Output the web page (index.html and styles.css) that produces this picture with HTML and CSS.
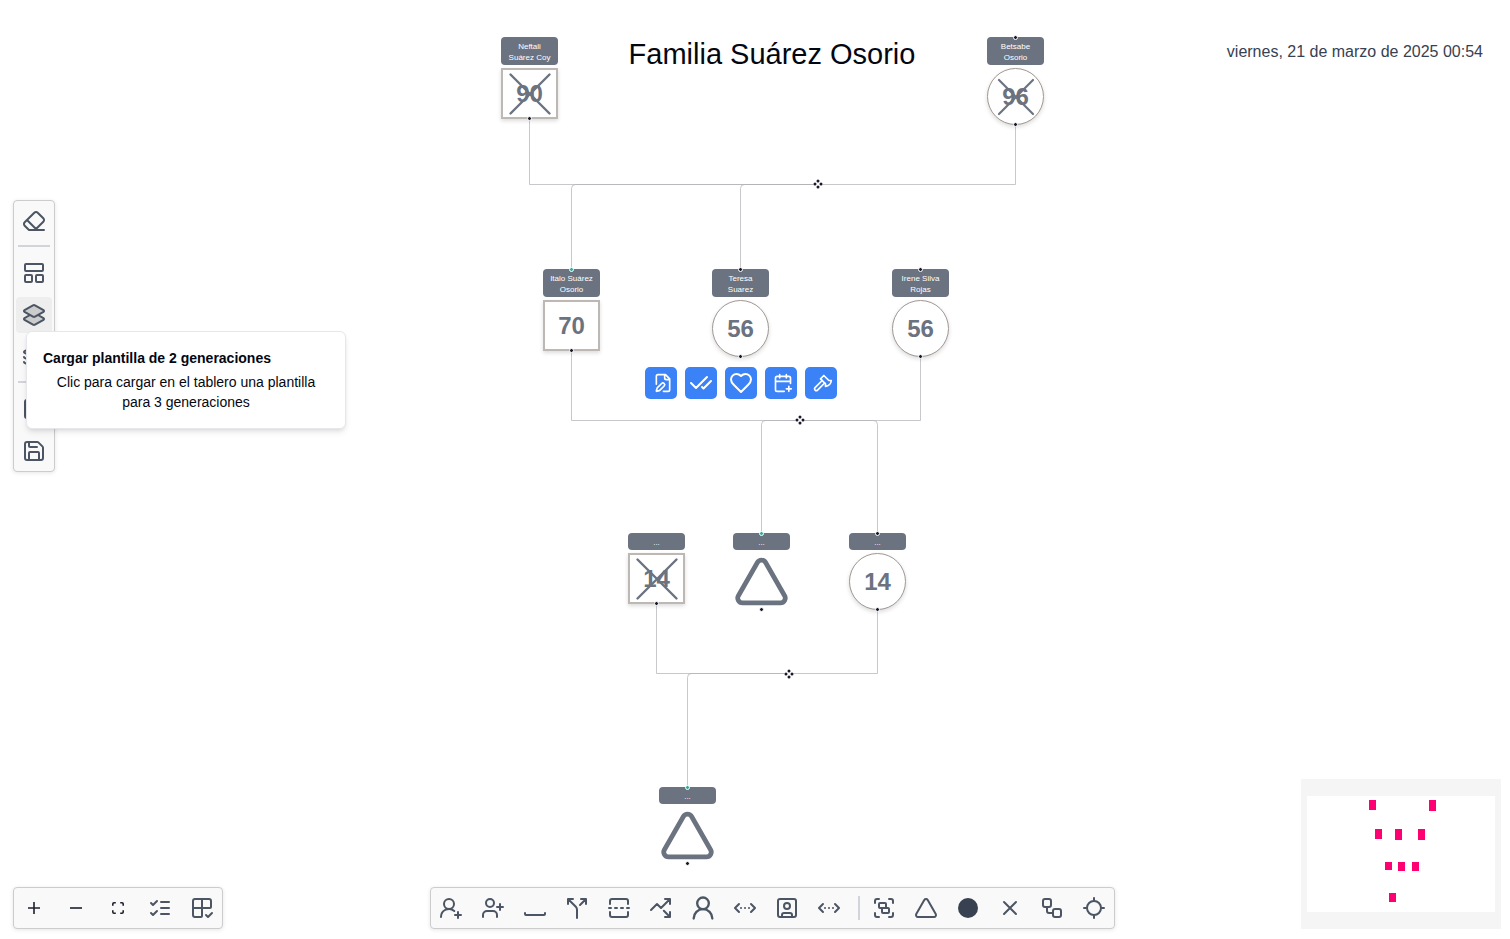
FILE: index.html
```html
<!DOCTYPE html>
<html lang="es">
<head>
<meta charset="utf-8">
<meta name="viewport" content="width=device-width, initial-scale=1">
<title>Familia Suárez Osorio</title>
<link rel="stylesheet" href="styles.css">
</head>
<body>
<svg class="sprite" aria-hidden="true">
  <symbol id="eraser" viewBox="0 0 24 24"><path d="m7 21-4.3-4.3c-1-1-1-2.5 0-3.4l9.6-9.6c1-1 2.5-1 3.4 0l5.6 5.6c1 1 1 2.5 0 3.4L13 21M22 21H7M5 11l9 9"/></symbol>
  <symbol id="panels" viewBox="0 0 24 24"><rect width="18" height="7" x="3" y="3" rx="1"/><rect width="7" height="7" x="3" y="14" rx="1"/><rect width="7" height="7" x="14" y="14" rx="1"/></symbol>
  <symbol id="layers2" viewBox="0 0 24 24"><path d="m16.02 12 5.48 3.13a1 1 0 0 1 0 1.74L13 21.74a2 2 0 0 1-2 0l-8.5-4.87a1 1 0 0 1 0-1.74L7.98 12"/><path d="M13 13.74a2 2 0 0 1-2 0L2.5 8.87a1 1 0 0 1 0-1.74L11 2.26a2 2 0 0 1 2 0l8.5 4.87a1 1 0 0 1 0 1.74Z"/></symbol>
  <symbol id="layers3" viewBox="0 0 24 24"><path d="M12.83 2.18a2 2 0 0 0-1.66 0L2.6 6.08a1 1 0 0 0 0 1.83l8.58 3.91a2 2 0 0 0 1.66 0l8.58-3.9a1 1 0 0 0 0-1.83z"/><path d="M2 12a1 1 0 0 0 .58.91l8.6 3.91a2 2 0 0 0 1.65 0l8.58-3.9A1 1 0 0 0 22 12"/><path d="M2 17a1 1 0 0 0 .58.91l8.6 3.91a2 2 0 0 0 1.65 0l8.58-3.9A1 1 0 0 0 22 17"/></symbol>
  <symbol id="image" viewBox="0 0 24 24"><rect width="18" height="18" x="3" y="3" rx="2"/><circle cx="9" cy="9" r="2"/><path d="m21 15-3.1-3.1a2 2 0 0 0-2.8 0L6 21"/></symbol>
  <symbol id="save" viewBox="0 0 24 24"><path d="M15.2 3a2 2 0 0 1 1.4.6l3.8 3.8a2 2 0 0 1 .6 1.4V19a2 2 0 0 1-2 2H5a2 2 0 0 1-2-2V5a2 2 0 0 1 2-2z"/><path d="M17 21v-7a1 1 0 0 0-1-1H8a1 1 0 0 0-1 1v7M7 3v4a1 1 0 0 0 1 1h7"/></symbol>
  <symbol id="plus" viewBox="0 0 12 12"><path d="M6 0v12M0 6h12"/></symbol>
  <symbol id="minus" viewBox="0 0 12 12"><path d="M0 6h12"/></symbol>
  <symbol id="fit" viewBox="0 0 12 12"><path d="M.8 3.8V2Q.8.8 2 .8h1.8M8.2.8H10q1.2 0 1.2 1.2v1.8M11.2 8.2V10q0 1.2-1.2 1.2H8.2M3.8 11.2H2Q.8 11.2.8 10V8.2"/></symbol>
  <symbol id="checks" viewBox="0 0 24 24"><path d="m3 17 2 2 4-4M3 7l2 2 4-4M13 6h8M13 12h8M13 18h8"/></symbol>
  <symbol id="gridcheck" viewBox="0 0 24 24"><path d="M12 3v17a1 1 0 0 1-1 1H5a2 2 0 0 1-2-2V5a2 2 0 0 1 2-2h14a2 2 0 0 1 2 2v6a1 1 0 0 1-1 1H3M16 19l2 2 4-4"/></symbol>
  <symbol id="userroundplus" viewBox="0 0 24 24"><path d="M2 21a8 8 0 0 1 13.292-6M19 16v6M22 19h-6"/><circle cx="10" cy="8" r="5"/></symbol>
  <symbol id="userplus" viewBox="0 0 24 24"><path d="M16 21v-2a4 4 0 0 0-4-4H6a4 4 0 0 0-4 4v2M19 8v6M22 11h-6"/><circle cx="9" cy="7" r="4"/></symbol>
  <symbol id="space" viewBox="0 0 24 24"><path d="M22 17v1c0 .5-.5 1-1 1H3c-.5 0-1-.5-1-1v-1"/></symbol>
  <symbol id="split" viewBox="0 0 24 24"><path d="M16 3h5v5M8 3H3v5M12 22v-8.3a4 4 0 0 0-1.172-2.872L3 3M15 9l6-6"/></symbol>
  <symbol id="flip" viewBox="0 0 24 24"><path d="M21 8V5a2 2 0 0 0-2-2H5a2 2 0 0 0-2 2v3M21 16v3a2 2 0 0 1-2 2H5a2 2 0 0 1-2-2v-3M4 12H2M10 12H8M16 12h-2M22 12h-2"/></symbol>
  <symbol id="trend" viewBox="0 0 24 24"><path d="M14.828 14.828 21 21M21 16v5h-5M21 3l-9 9-4-4-6 6M21 8V3h-5"/></symbol>
  <symbol id="userround" viewBox="0 0 24 24"><circle cx="12" cy="8" r="5"/><path d="M20 21a8 8 0 0 0-16 0"/></symbol>
  <symbol id="ellipsis" viewBox="0 0 24 24"><path d="m18 8 4 4-4 4M6 8l-4 4 4 4M8 12h.01M12 12h.01M16 12h.01"/></symbol>
  <symbol id="squareuser" viewBox="0 0 24 24"><rect width="18" height="18" x="3" y="3" rx="2"/><circle cx="12" cy="10" r="3"/><path d="M7 21v-2a2 2 0 0 1 2-2h6a2 2 0 0 1 2 2v2"/></symbol>
  <symbol id="group" viewBox="0 0 24 24"><path d="M3 7V5c0-1.1.9-2 2-2h2M17 3h2c1.1 0 2 .9 2 2v2M21 17v2c0 1.1-.9 2-2 2h-2M7 21H5c-1.1 0-2-.9-2-2v-2"/><rect width="7" height="5" x="7" y="7" rx="1"/><rect width="7" height="5" x="10" y="12" rx="1"/></symbol>
  <symbol id="triangle" viewBox="0 0 24 24"><path d="M13.73 4a2 2 0 0 0-3.46 0l-8 14A2 2 0 0 0 4 21h16a2 2 0 0 0 1.73-3Z"/></symbol>
  <symbol id="disc" viewBox="0 0 24 24"><circle cx="12" cy="12" r="10" fill="#374151" stroke="none"/></symbol>
  <symbol id="x" viewBox="0 0 24 24"><path d="M18 6 6 18M6 6l12 12"/></symbol>
  <symbol id="workflow" viewBox="0 0 24 24"><rect width="8" height="8" x="3" y="3" rx="2"/><path d="M7 11v4a2 2 0 0 0 2 2h4"/><rect width="8" height="8" x="13" y="13" rx="2"/></symbol>
  <symbol id="locate" viewBox="0 0 24 24"><path d="M2 12h3M19 12h3M12 2v3M12 19v3"/><circle cx="12" cy="12" r="7"/></symbol>
  <symbol id="filepen" viewBox="0 0 24 24"><path d="M12.5 22H18a2 2 0 0 0 2-2V7l-5-5H6a2 2 0 0 0-2 2v9.5M14 2v4a2 2 0 0 0 2 2h4"/><path d="M13.378 15.626a1 1 0 1 0-3.004-3.004l-5.01 5.012a2 2 0 0 0-.506.854l-.837 2.87a.5.5 0 0 0 .62.62l2.87-.837a2 2 0 0 0 .854-.506z"/></symbol>
  <symbol id="checkcheck" viewBox="0 0 24 24"><path d="M18 6 7 17l-5-5M22 10l-7.5 7.5L13 16"/></symbol>
  <symbol id="heart" viewBox="0 0 24 24"><path d="M19 14c1.49-1.46 3-3.21 3-5.5A5.5 5.5 0 0 0 16.5 3c-1.76 0-3 .5-4.5 2-1.5-1.5-2.74-2-4.5-2A5.5 5.5 0 0 0 2 8.5c0 2.3 1.5 4.05 3 5.5l7 7Z"/></symbol>
  <symbol id="calendar" viewBox="0 0 24 24"><path d="M16 19h6M16 2v4M19 16v6M21 12.598V6a2 2 0 0 0-2-2H5a2 2 0 0 0-2 2v14a2 2 0 0 0 2 2h8.5M3 10h18M8 2v4"/></symbol>
  <symbol id="axe" viewBox="0 0 24 24"><path d="m14 12-8.5 8.5a2.12 2.12 0 1 1-3-3L11 9"/><path d="M15 13 9 7l4-4 6 6h3a8 8 0 0 1-7 7z"/></symbol>
  <symbol id="joint" viewBox="0 0 10 10"><path class="joint-back" d="M5 0l5 5-5 5-5-5z"/><circle cx="5" cy="2" r="1.5"/><circle cx="8" cy="5" r="1.5"/><circle cx="5" cy="8" r="1.5"/><circle cx="2" cy="5" r="1.5"/></symbol>
</svg>

<main class="board">
  <header class="header">
    <h1 class="title">Familia Suárez Osorio</h1>
    <time class="date" datetime="2025-03-21T00:54">viernes, 21 de marzo de 2025 00:54</time>
  </header>

  <section class="canvas" aria-label="Genograma">
    <svg class="edges" aria-hidden="true">
      <g class="wires">
        <path d="M529.5 120V184.5H818"/>
        <path d="M1015.5 125V184.5H818"/>
        <path d="M571.5 270V188.5q0-4 4-4H818"/>
        <path d="M740.5 270V188.5q0-4 4-4H818"/>
        <path d="M571.5 352V420.5H800"/>
        <path d="M920.5 357V420.5H800"/>
        <path d="M761.5 534V424.5q0-4 4-4H800"/>
        <path d="M877.5 534V424.5q0-4-4-4H800"/>
        <path d="M656.5 605V673.5H789"/>
        <path d="M877.5 610V673.5H789"/>
        <path d="M687.5 788V677.5q0-4 4-4H789"/>
      </g>
      <use href="#joint" x="813" y="179" width="10" height="10"/>
      <use href="#joint" x="795" y="415" width="10" height="10"/>
      <use href="#joint" x="784" y="669" width="10" height="10"/>
    </svg>

    <article class="node at-neftali"><p class="name">Neftali<br>Suárez Coy</p><div class="shape square">90<svg class="cross"><use href="#x"/></svg></div><i class="port out"></i></article>
    <article class="node at-betsabe"><i class="port in"></i><p class="name">Betsabe<br>Osorio</p><div class="shape round">96<svg class="cross"><use href="#x"/></svg></div><i class="port out"></i></article>
    <article class="node at-italo"><i class="port in linked"></i><p class="name">Italo Suárez<br>Osorio</p><div class="shape square">70</div><i class="port out"></i></article>
    <article class="node at-teresa"><i class="port in"></i><p class="name">Teresa<br>Suarez</p><div class="shape round">56</div><i class="port out"></i></article>
    <article class="node at-irene"><i class="port in"></i><p class="name">Irene Silva<br>Rojas</p><div class="shape round">56</div><i class="port out"></i></article>
    <article class="node at-son"><p class="name">...</p><div class="shape square">14<svg class="cross"><use href="#x"/></svg></div><i class="port out"></i></article>
    <article class="node at-pregnancy"><i class="port in linked"></i><p class="name">...</p><svg class="tri"><use href="#triangle"/></svg><i class="port out"></i></article>
    <article class="node at-daughter"><i class="port in"></i><p class="name">...</p><div class="shape round">14</div><i class="port out"></i></article>
    <article class="node at-grandchild"><i class="port in linked"></i><p class="name">...</p><svg class="tri"><use href="#triangle"/></svg><i class="port out"></i></article>

    <div class="actions">
      <button class="action" aria-label="Editar"><svg class="icon small"><use href="#filepen"/></svg></button>
      <button class="action" aria-label="Confirmar"><svg class="icon"><use href="#checkcheck"/></svg></button>
      <button class="action" aria-label="Relación"><svg class="icon"><use href="#heart"/></svg></button>
      <button class="action" aria-label="Agregar fecha"><svg class="icon small"><use href="#calendar"/></svg></button>
      <button class="action" aria-label="Cortar"><svg class="icon small"><use href="#axe"/></svg></button>
    </div>
  </section>

  <nav class="toolbar side" aria-label="Plantillas">
    <button class="tool" aria-label="Borrar"><svg class="icon"><use href="#eraser"/></svg></button>
    <span class="rule"></span>
    <button class="tool" aria-label="Plantilla"><svg class="icon"><use href="#panels"/></svg></button>
    <button class="tool active" aria-label="2 generaciones" aria-describedby="tip"><svg class="icon"><use href="#layers2"/></svg></button>
    <button class="tool" aria-label="3 generaciones"><svg class="icon"><use href="#layers3"/></svg></button>
    <span class="rule"></span>
    <button class="tool" aria-label="Imagen"><svg class="icon"><use href="#image"/></svg></button>
    <button class="tool" aria-label="Guardar"><svg class="icon"><use href="#save"/></svg></button>
  </nav>

  <div class="tooltip" id="tip" role="tooltip">
    <h2 class="tip-title">Cargar plantilla de 2 generaciones</h2>
    <p class="tip-text">Clic para cargar en el tablero una plantilla para 3 generaciones</p>
  </div>

  <nav class="toolbar view" aria-label="Vista">
    <button class="tool" aria-label="Acercar"><svg class="icon tiny"><use href="#plus"/></svg></button>
    <button class="tool" aria-label="Alejar"><svg class="icon tiny"><use href="#minus"/></svg></button>
    <button class="tool" aria-label="Ajustar"><svg class="icon tiny"><use href="#fit"/></svg></button>
    <button class="tool" aria-label="Lista"><svg class="icon"><use href="#checks"/></svg></button>
    <button class="tool" aria-label="Cuadrícula"><svg class="icon"><use href="#gridcheck"/></svg></button>
  </nav>

  <nav class="toolbar main" aria-label="Herramientas">
    <button class="tool" aria-label="Agregar familiar"><svg class="icon"><use href="#userroundplus"/></svg></button>
    <button class="tool" aria-label="Agregar persona"><svg class="icon"><use href="#userplus"/></svg></button>
    <button class="tool" aria-label="Unión"><svg class="icon"><use href="#space"/></svg></button>
    <button class="tool" aria-label="Dividir"><svg class="icon"><use href="#split"/></svg></button>
    <button class="tool" aria-label="Voltear"><svg class="icon"><use href="#flip"/></svg></button>
    <button class="tool" aria-label="Tendencia"><svg class="icon"><use href="#trend"/></svg></button>
    <button class="tool" aria-label="Persona"><svg class="icon large"><use href="#userround"/></svg></button>
    <button class="tool" aria-label="Relación abierta"><svg class="icon"><use href="#ellipsis"/></svg></button>
    <button class="tool" aria-label="Retrato"><svg class="icon"><use href="#squareuser"/></svg></button>
    <button class="tool" aria-label="Separación"><svg class="icon"><use href="#ellipsis"/></svg></button>
    <span class="rule"></span>
    <button class="tool" aria-label="Agrupar"><svg class="icon"><use href="#group"/></svg></button>
    <button class="tool" aria-label="Embarazo"><svg class="icon"><use href="#triangle"/></svg></button>
    <button class="tool" aria-label="Punto"><svg class="icon"><use href="#disc"/></svg></button>
    <button class="tool" aria-label="Fallecido"><svg class="icon"><use href="#x"/></svg></button>
    <button class="tool" aria-label="Flujo"><svg class="icon"><use href="#workflow"/></svg></button>
    <button class="tool" aria-label="Centrar"><svg class="icon"><use href="#locate"/></svg></button>
  </nav>

  <svg class="minimap" viewBox="0 0 200 150" role="img" aria-label="Minimapa">
    <rect class="window" x="6" y="17" width="188" height="116"/>
    <g class="pins">
      <rect x="68" y="21" width="7" height="10"/><rect x="128" y="21" width="7" height="11"/>
      <rect x="74" y="50" width="7" height="10"/><rect x="94" y="50" width="7" height="11"/><rect x="117" y="50" width="7" height="11"/>
      <rect x="84" y="83" width="7" height="8"/><rect x="97" y="83" width="7" height="9"/><rect x="111" y="83" width="7" height="9"/>
      <rect x="88" y="114" width="7" height="9"/>
    </g>
  </svg>
</main>
</body>
</html>
```

FILE: styles.css
```css
* { box-sizing: border-box; margin: 0; padding: 0; }

body {
  background: #fff;
  color: #030712;
  font-family: "Liberation Sans", Arial, sans-serif;
}

.sprite { position: absolute; width: 0; height: 0; }

.board {
  position: relative;
  min-height: 100vh;
  overflow: hidden;
}

.header {
  display: grid;
  grid-template-columns: 1fr auto 1fr;
  align-items: start;
  padding: 36px 27px 0 61px;
}
.title {
  grid-column: 2;
  font-size: 29px;
  line-height: 36px;
  font-weight: 400;
}
.date {
  justify-self: end;
  padding-top: 4px;
  font-size: 16px;
  line-height: 24px;
  color: #374151;
}

/* Canvas */
.canvas { position: absolute; inset: 0; }
.edges { position: absolute; width: 100%; height: 100%; }
.wires { fill: none; stroke: #b1b1b7; stroke-opacity: .7; }
#joint { fill: #1a192b; }
.joint-back { fill: #fff; }

.node {
  position: absolute;
  display: flex;
  flex-direction: column;
  gap: 3px;
  width: 57px;
}
.name {
  padding: 4px 0 2px;
  border-radius: 4px;
  background: #6b7280;
  color: #fff;
  font-size: 8px;
  line-height: 11px;
  text-align: center;
}
.shape {
  position: relative;
  display: grid;
  place-items: center;
  border: 1px solid #a09893;
  background: #fff;
  box-shadow: 0 2px 4px rgba(0, 0, 0, .14);
  color: #6b7280;
  font-size: 24px;
  line-height: 28px;
  font-weight: 700;
}
.square { height: 51px; border-width: 2px; border-color: #beb8b4; }
.round { height: 57px; border-radius: 50%; }
.cross {
  position: absolute;
  inset: -50px;
  margin: auto;
  width: 78px;
  height: 78px;
  fill: none;
  stroke: #6b7280;
  stroke-width: .75;
  stroke-linecap: round;
}
.round .cross { width: 68px; height: 68px; }
.tri {
  width: 57px;
  height: 57px;
  fill: none;
  stroke: #6b7280;
  stroke-width: 2;
  stroke-linejoin: round;
}
.port {
  position: absolute;
  left: 26px;
  width: 5px;
  height: 5px;
  border: 1px solid #fff;
  border-radius: 50%;
  background: #1a192b;
}
.in { top: -2px; }
.out { bottom: -2px; }
.linked { background: #14b8a6; }

.at-neftali { left: 501px; top: 37px; }
.at-betsabe { left: 987px; top: 37px; }
.at-italo { left: 543px; top: 269px; }
.at-teresa { left: 712px; top: 269px; }
.at-irene { left: 892px; top: 269px; }
.at-son { left: 628px; top: 533px; }
.at-pregnancy { left: 733px; top: 533px; }
.at-daughter { left: 849px; top: 533px; }
.at-grandchild { left: 659px; top: 787px; }

.actions {
  position: absolute;
  left: 645px;
  top: 367px;
  display: flex;
  gap: 8px;
}
.action {
  display: grid;
  place-items: center;
  width: 32px;
  height: 32px;
  border: 0;
  border-radius: 5px;
  background: #3b82f6;
  color: #fff;
}

/* Icons */
.icon {
  width: 24px;
  height: 24px;
  fill: none;
  stroke: currentColor;
  stroke-width: 2;
  stroke-linecap: round;
  stroke-linejoin: round;
}
.icon.small { width: 20px; height: 20px; margin-left: 4px; }
.icon.large { width: 28px; height: 28px; }
.icon.tiny { width: 12px; height: 12px; stroke: #1f2030; stroke-width: 1.6; stroke-linecap: butt; }

/* Toolbars */
.toolbar {
  position: absolute;
  display: flex;
  align-items: center;
  gap: 6px;
  padding: 2px;
  border: 1px solid #ccc;
  border-radius: 4px;
  background: #f9f9f9;
  box-shadow: 0 1px 4px rgba(0, 0, 0, .1);
}
.tool {
  display: grid;
  place-items: center;
  width: 36px;
  height: 36px;
  border: 0;
  border-radius: 4px;
  background: none;
  color: #4b5563;
}
.tool.active { background: #eee; }
.tool.active .icon { fill: #ccc; }
.side { left: 13px; top: 200px; flex-direction: column; }
.side .rule { width: 32px; height: 2px; margin-bottom: 2px; background: #d1d5db; }
.view { left: 13px; bottom: 10px; }
.main { left: 34px; right: 0; bottom: 10px; width: fit-content; margin: 0 auto; }
.main .rule { width: 2px; height: 24px; margin-left: 5px; background: #d1d5db; }

.tooltip {
  position: absolute;
  left: 26px;
  top: 331px;
  display: grid;
  gap: 4px;
  width: 320px;
  padding: 16px;
  border: 1px solid #e5e7eb;
  border-radius: 6px;
  background: #fff;
  box-shadow: 0 4px 6px -1px rgba(0, 0, 0, .1), 0 2px 4px -2px rgba(0, 0, 0, .1);
  font-size: 14px;
  line-height: 20px;
}
.tip-title { font-size: 14px; font-weight: 700; }
.tip-text { text-align: center; }

.minimap {
  position: absolute;
  right: 9px;
  bottom: 10px;
  width: 200px;
  height: 150px;
  background: #f5f5f5;
}
.window { fill: #fff; }
.pins { fill: #ff0072; }
```
